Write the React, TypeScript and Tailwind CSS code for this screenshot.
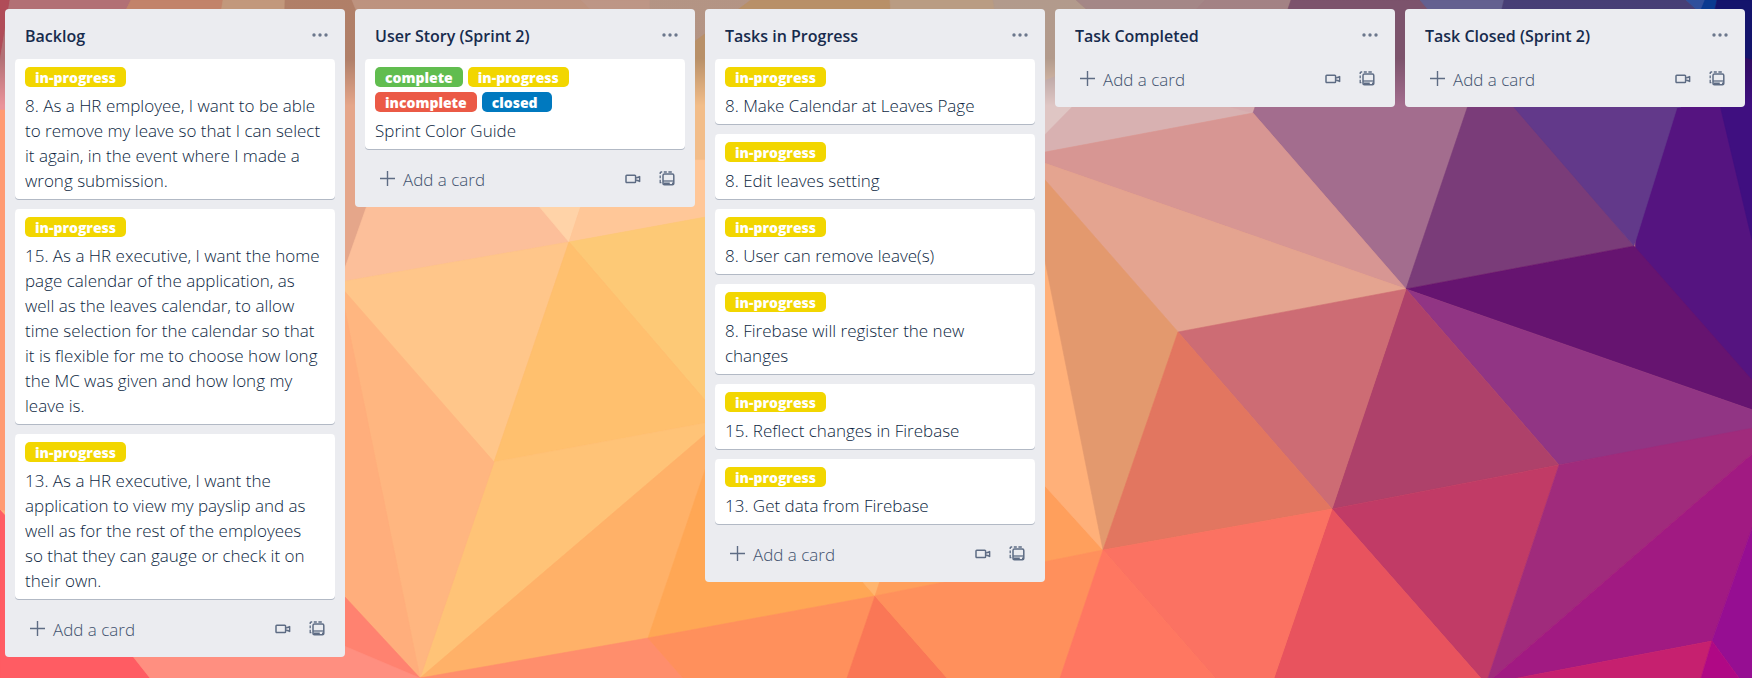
import React from "react";

type LabelKind = "complete" | "in-progress" | "incomplete" | "closed";

interface CardData {
  labels: LabelKind[];
  text: string;
}

interface ListData {
  title: string;
  cards: CardData[];
}

const lists: ListData[] = [
  {
    title: "Backlog",
    cards: [
      {
        labels: ["in-progress"],
        text: "8. As a HR employee, I want to be able\nto remove my leave so that I can select\nit again, in the event where I made a\nwrong submission.",
      },
      {
        labels: ["in-progress"],
        text: "15. As a HR executive, I want the home\npage calendar of the application, as\nwell as the leaves calendar, to allow\ntime selection for the calendar so that\nit is flexible for me to choose how long\nthe MC was given and how long my\nleave is.",
      },
      {
        labels: ["in-progress"],
        text: "13. As a HR executive, I want the\napplication to view my payslip and as\nwell as for the rest of the employees\nso that they can gauge or check it on\ntheir own.",
      },
    ],
  },
  {
    title: "User Story (Sprint 2)",
    cards: [
      {
        labels: ["complete", "in-progress", "incomplete", "closed"],
        text: "Sprint Color Guide",
      },
    ],
  },
  {
    title: "Tasks in Progress",
    cards: [
      { labels: ["in-progress"], text: "8. Make Calendar at Leaves Page" },
      { labels: ["in-progress"], text: "8. Edit leaves setting" },
      { labels: ["in-progress"], text: "8. User can remove leave(s)" },
      { labels: ["in-progress"], text: "8. Firebase will register the new\nchanges" },
      { labels: ["in-progress"], text: "15. Reflect changes in Firebase" },
      { labels: ["in-progress"], text: "13. Get data from Firebase" },
    ],
  },
  { title: "Task Completed", cards: [] },
  { title: "Task Closed (Sprint 2)", cards: [] },
];

const labelColors: Record<LabelKind, string> = {
  complete: "bg-[#61bd4f]",
  "in-progress": "bg-[#f2d600]",
  incomplete: "bg-[#eb5a46]",
  closed: "bg-[#0079bf]",
};

// Facets of the low-poly wallpaper: fill colour and corner points.
const facets: [string, string][] = [
  ["#551480", "1640,40 1752,0 1800,430 1634,300"],
  ["#e76474", "0,0 10,0 0,60"],
  ["#ea939a", "10,0 131,0 60,140 0,120 0,60"],
  ["#ffac8b", "131,0 223,0 200,140 60,140"],
  ["#ffc8a3", "223,0 285,0 290,140 200,140"],
  ["#e8a789", "285,0 352,0 400,120 340,288 280,200"],
  ["#ff9a72", "0,110 345,110 345,520 0,510"],
  ["#e5a68a", "340,60 420,60 345,270 335,290"],
  ["#f9c1a7", "352,0 581,0 700,110 700,215 400,200 400,120"],
  ["#f9c5b0", "581,0 650,0 650,110 690,110"],
  ["#ecc3ae", "650,0 751,0 690,45 690,120 650,110"],
  ["#f2bd89", "751,0 890,0 900,200 690,220 690,45"],
  ["#f3cdac", "890,0 993,0 1025,156 900,200"],
  ["#eacbb8", "993,0 1076,0 1130,48 1025,175"],
  ["#dfc6c4", "1130,48 1024,175 1020,90"],
  ["#d8b1b1", "1076,0 1205,0 1253,113 1024,156 1130,48"],
  ["#d6abae", "1205,0 1291,0 1253,113 1130,80"],
  ["#a36d8e", "1291,0 1420,0 1505,80 1406,289 1253,113"],
  ["#827ebd", "1420,0 1504,0 1490,60 1470,60"],
  ["#fcbf9a", "390,140 538,200 569,242 340,282"],
  ["#ffd3a8", "500,160 596,160 569,242"],
  ["#ffc798", "596,160 760,160 722,214 569,242"],
  ["#ffc68a", "569,242 494,462 340,288 340,282"],
  ["#fdc976", "569,242 722,214 722,420"],
  ["#ffc06e", "569,242 722,420 494,462"],
  ["#ffc377", "494,462 722,420 420,678"],
  ["#ffb168", "420,678 722,420 648,638"],
  ["#ffa755", "648,638 722,420 875,596"],
  ["#ffb56e", "722,420 875,596 900,520"],
  ["#ffb680", "340,286 494,462 420,678"],
  ["#ffae7c", "340,286 420,678 345,597 330,580"],
  ["#ff8270", "345,597 420,678 344,655 330,640"],
  ["#ff5c63", "0,510 120,640 150,678 0,678"],
  ["#ff8f80", "120,640 330,640 420,678 150,678"],
  ["#ff8e6c", "420,678 648,638 683,678"],
  ["#ff905c", "648,638 875,596 847,678 683,678"],
  ["#fa7756", "875,596 947,678 847,678"],
  ["#ff9f5c", "875,596 900,520 1010,400 1045,486 1103,550"],
  ["#ff905c", "875,596 1103,550 1060,678 947,678"],
  ["#ffb079", "1024,156 1103,550 1045,486 1010,400"],
  ["#d79693", "1024,156 1253,113 1406,289"],
  ["#e4a490", "1024,156 1406,289 1178,332"],
  ["#e3996e", "1024,156 1178,332 1103,550"],
  ["#5d529b", "1504,0 1686,0 1710,20 1681,107 1540,120 1490,60"],
  ["#7a3c79", "1480,70 1495,82 1634,246 1406,289"],
  ["#62398a", "1486,75 1695,50 1634,246"],
  ["#3e68cd", "1686,0 1705,0 1708,20"],
  ["#0d4cbd", "1705,0 1717,0 1708,40 1700,12"],
  ["#1a1a8e", "1717,0 1752,0 1752,60 1706,50"],
  ["#3f0f80", "1706,46 1752,60 1752,240"],
  ["#661470", "1406,289 1634,246 1790,423"],
  ["#913584", "1406,289 1790,423 1559,465"],
  ["#ae416a", "1406,289 1559,465 1332,509"],
  ["#cd6c74", "1406,289 1332,509 1178,332"],
  ["#e27660", "1178,332 1332,509 1103,550"],
  ["#c13b66", "1332,509 1559,465 1486,684"],
  ["#a02b7c", "1559,465 1790,421 1486,684"],
  ["#a11a82", "1790,421 1712,641 1486,684"],
  ["#960e92", "1790,421 1712,641 1739,678 1790,678"],
  ["#c6206f", "1486,684 1712,641 1701,678"],
  ["#b00885", "1712,641 1739,678 1701,678"],
  ["#e8535e", "1332,509 1486,684 1274,678"],
  ["#fb7262", "1332,509 1274,678 1215,678 1103,550"],
  ["#ff7761", "1103,550 1215,678 1060,678"],
];

function Wallpaper() {
  return (
    <svg
      className="absolute inset-0 h-full w-full"
      viewBox="0 0 1752 678"
      preserveAspectRatio="xMidYMid slice"
      aria-hidden="true"
    >
      <defs>
        <linearGradient id="topShade" x1="0" y1="0" x2="0" y2="1">
          <stop offset="0" stopColor="#000" stopOpacity="0.24" />
          <stop offset="0.55" stopColor="#000" stopOpacity="0.24" />
          <stop offset="1" stopColor="#000" stopOpacity="0" />
        </linearGradient>
      </defs>
      <rect width="1752" height="678" fill="#ffae7c" />
      {facets.map(([fill, points]) => (
        <polygon key={points} points={points} fill={fill} stroke={fill} strokeWidth="0.6" />
      ))}
      <rect width="1752" height="106" fill="url(#topShade)" />
    </svg>
  );
}

function DotsIcon() {
  return (
    <svg width="16" height="6" viewBox="0 0 16 6" fill="currentColor" aria-hidden="true">
      <circle cx="2" cy="3" r="1.7" />
      <circle cx="8" cy="3" r="1.7" />
      <circle cx="14" cy="3" r="1.7" />
    </svg>
  );
}

function PlusIcon() {
  return (
    <svg width="15" height="15" viewBox="0 0 15 15" stroke="currentColor" strokeWidth="1.4" aria-hidden="true">
      <path d="M7.5 0v15M0 7.5h15" />
    </svg>
  );
}

function VideoIcon() {
  return (
    <svg width="16" height="10" viewBox="0 0 16 10" fill="none" stroke="currentColor" strokeWidth="1.5" strokeLinejoin="round" aria-hidden="true">
      <rect x="1" y="1.2" width="9.6" height="7.4" rx="0.8" />
      <path d="M11.2 4l3.4-1.4v4.8L11.2 6" />
    </svg>
  );
}

function TemplateIcon() {
  return (
    <svg width="16" height="15" viewBox="0 0 16 15" fill="none" stroke="currentColor" strokeWidth="1.5" aria-hidden="true">
      <rect x="4" y="3" width="10.8" height="10.8" rx="1.4" />
      <path d="M4 10h10.8" strokeWidth="1.3" />
      <path d="M4.4 12.4h6.4M13 12.4h1.4" strokeWidth="2" />
      <path d="M1.2 3V2a1 1 0 0 1 1-1h1M4.8 1h3M9.4 1h3.4M1.2 4.6v2.6M1.2 8.8v2.8h1.2" strokeWidth="1.3" />
    </svg>
  );
}

function Card({ card }: { card: CardData }) {
  return (
    <li className="mt-2.5 rounded-[4px] bg-white px-2.5 pt-2 pb-1.5 shadow-[0_1px_0_rgba(9,30,66,0.25)]">
      <div className="flex flex-wrap gap-[5px] pr-10">
        {card.labels.map((label) => (
          <span
            key={label}
            className={`h-5 min-w-[70px] rounded-[5px] px-2.5 text-[14px] leading-[21px] font-extrabold text-white ${labelColors[label]}`}
          >
            {label}
          </span>
        ))}
      </div>
      <p className="mt-1.5 text-[17px] leading-[25px] font-light whitespace-pre-line text-[#0c1f42]">{card.text}</p>
    </li>
  );
}

function List({ list }: { list: ListData }) {
  return (
    <section className="min-w-[272px] flex-1 rounded-[4px] bg-[#ebecf0] px-2.5">
      <header className="flex h-10 items-start justify-between pr-[7px] pl-2.5">
        <h2 className="pt-[15px] text-[16px] leading-[25px] font-semibold text-[#172b4d]">{list.title}</h2>
        <button type="button" aria-label={`${list.title} actions`} className="pt-[23px] text-[#6b778c]">
          <DotsIcon />
        </button>
      </header>
      <ul>
        {list.cards.map((card) => (
          <Card key={card.text} card={card} />
        ))}
      </ul>
      <footer className="flex h-[58px] items-center pt-px pr-2.5 pl-[15px] text-[#5e6c84]">
        <button type="button" className="flex items-center gap-2 text-[17px] leading-[25px]">
          <PlusIcon />
          <span className="pt-0.5 font-light text-[#42526e]">Add a card</span>
        </button>
        <div className="ml-auto flex items-center gap-[18px]">
          <button type="button" aria-label="Record a video">
            <VideoIcon />
          </button>
          <button type="button" aria-label="Create from template">
            <TemplateIcon />
          </button>
        </div>
      </footer>
    </section>
  );
}

export default function App() {
  return (
    <div className="relative min-h-screen overflow-hidden font-['Open_Sans','Noto_Sans',sans-serif]">
      <Wallpaper />
      <main className="relative flex items-start gap-2.5 pt-[9px] pr-[7px] pb-5 pl-[5px]">
        {lists.map((list) => (
          <List key={list.title} list={list} />
        ))}
      </main>
    </div>
  );
}
